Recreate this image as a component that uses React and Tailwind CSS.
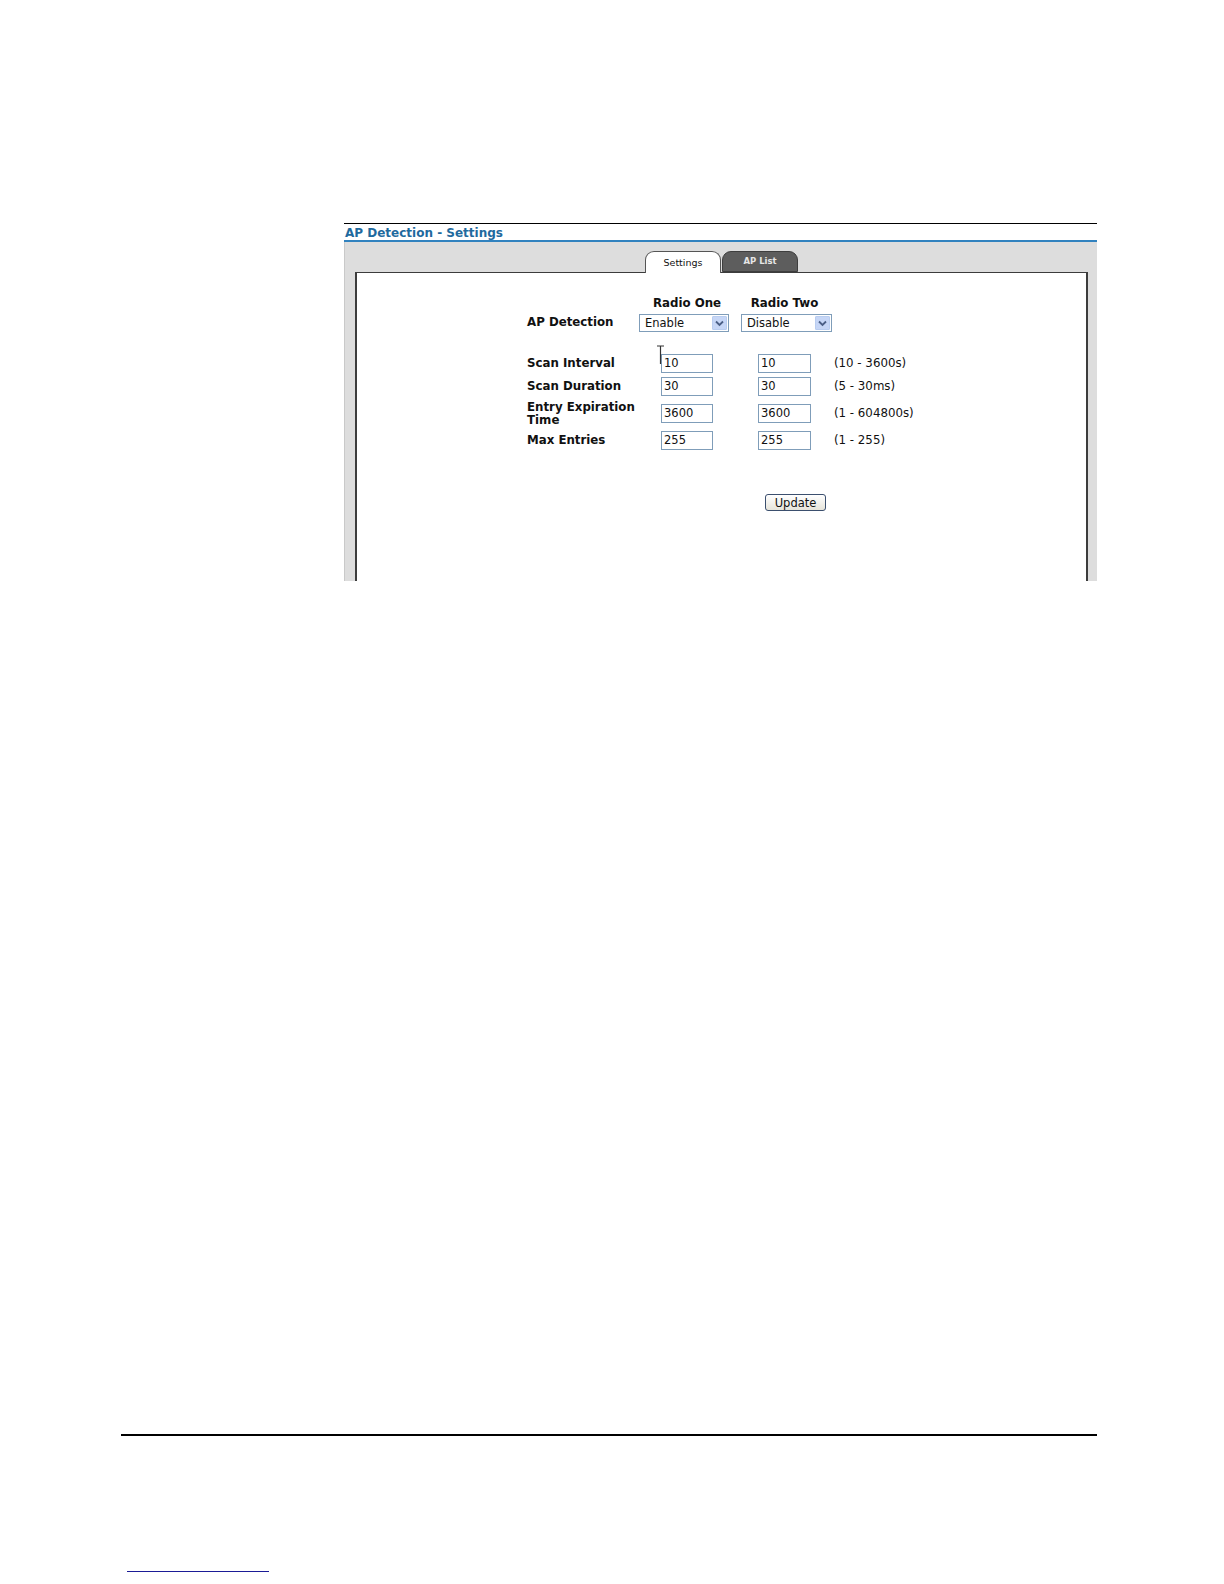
import React from 'react';

const font = "font-['DejaVu_Sans',Verdana,sans-serif]";

function Select({ value, width }) {
  return (
    <div
      className={`flex h-[18px] items-stretch border border-[#7f9db9] bg-white ${width}`}
    >
      <span className="flex-1 pl-[5px] text-[11.5px] leading-[16px] text-[#111]">{value}</span>
      <span className="m-px flex w-[15px] items-center justify-center rounded-[1px] border border-[#b9cdf0] bg-[#c6d6f6]">
        <svg width="9" height="7" viewBox="0 0 9 7">
          <path d="M1 1.5 4.5 5 8 1.5" fill="none" stroke="#4b5f86" strokeWidth="1.8" />
        </svg>
      </span>
    </div>
  );
}

function Field({ value, offset, width }) {
  return (
    <div className={offset}>
      <div
        className={`h-[19px] border border-[#7f9db9] bg-white pl-[2px] text-[11.5px] leading-[17px] text-[#111] ${width}`}
      >
        {value}
      </div>
    </div>
  );
}

const rows = [
  { label: 'Scan Interval', one: '10', two: '10', range: '(10 - 3600s)', mt: 'mt-[22px]' },
  { label: 'Scan Duration', one: '30', two: '30', range: '(5 - 30ms)', mt: 'mt-[4px]' },
  { label: 'Entry Expiration Time', one: '3600', two: '3600', range: '(1 - 604800s)', mt: 'mt-[8px]', tall: true },
  { label: 'Max Entries', one: '255', two: '255', range: '(1 - 255)', mt: 'mt-[8px]' },
];

export default function App() {
  return (
    <div className={`relative flex h-[1584px] w-[1224px] flex-col bg-white ${font}`}>
      <div className="pl-[344px] pt-[223px]">
        <div className="w-[753px] border-t border-black">
          <div className="h-[18px] border-b-2 border-[#3182bf] pl-px text-[12px] font-bold leading-[18px] text-[#1f6a9e]">
            AP Detection - Settings
          </div>
          <div className="flex h-[339px] flex-col overflow-hidden border-l border-[#c9c9c9] bg-[#dddddd] pl-[10px] pr-[9px] pt-[9px]">
            <div className="relative z-10 -mb-px flex h-[22px] justify-center">
              <div className="flex w-[76px] items-center justify-center rounded-t-[9px] border border-b-0 border-[#555] bg-white text-[9.5px] leading-none text-[#111]">
                Settings
              </div>
              <div className="ml-px flex h-[21px] w-[76px] items-center justify-center rounded-t-[9px] border border-[#3e3e3e] bg-[#5d5d5d] text-[8.5px] font-bold leading-none text-[#e6e6e6]">
                AP List
              </div>
            </div>
            <div className="flex-1 border-x-2 border-t border-[#3c3c3c] bg-white">
              <div className="pl-[170px] pt-[23px]">
                <div className="flex h-[16px] items-center">
                  <div className="w-[112px]" />
                  <div className="flex w-[102px] pl-[22px]">
                    <div className="flex w-[52px] justify-center whitespace-nowrap text-[11.8px] font-bold text-[#111]">Radio One</div>
                  </div>
                  <div className="flex w-[93px] pl-[17px]">
                    <div className="flex w-[53px] justify-center whitespace-nowrap text-[11.8px] font-bold text-[#111]">Radio Two</div>
                  </div>
                </div>
                <div className="mt-[2px] flex h-[18px] items-center">
                  <div className="w-[112px] text-[11.8px] font-bold text-[#111]">AP Detection</div>
                  <div className="w-[102px]">
                    <Select value="Enable" width="w-[90px]" />
                  </div>
                  <Select value="Disable" width="w-[91px]" />
                </div>
                {rows.map((r) => (
                  <div key={r.label} className={`flex h-[19px] ${r.tall ? 'items-start' : 'items-center'} ${r.mt}`}>
                    <div
                      className={`w-[112px] text-[11.8px] font-bold text-[#111] ${
                        r.tall ? '-mt-[3px] leading-[13px]' : 'leading-[19px]'
                      }`}
                    >
                      {r.tall ? (
                        <>
                          Entry Expiration
                          <br />
                          Time
                        </>
                      ) : (
                        r.label
                      )}
                    </div>
                    <Field value={r.one} offset="w-[102px] pl-[22px]" width="w-[52px]" />
                    <Field value={r.two} offset="w-[93px] pl-[17px]" width="w-[53px]" />
                    <div className="self-center text-[11.8px] leading-[19px] text-[#111]">{r.range}</div>
                  </div>
                ))}
                <div className="ml-[238px] mt-[44px] flex">
                  <button className="h-[17px] w-[61px] rounded-[3px] border border-[#3b4f6e] bg-gradient-to-b from-white to-[#e6e4da] text-[11.5px] leading-[14px] text-[#111]">
                    Update
                  </button>
                </div>
              </div>
            </div>
          </div>
        </div>
      </div>

      <div className="ml-[121px] mt-[853px] h-[2px] w-[976px] bg-black" />
      <div className="ml-[127px] mt-[135px] h-px w-[142px] bg-[#1b1b96]" />

      {/* text cursor hovering over the first field */}
      <svg className="absolute left-[656px] top-[345px]" width="9" height="20" viewBox="0 0 9 20">
        <path d="M1 1h7M4.5 1v18" fill="none" stroke="#333" strokeWidth="1.2" />
      </svg>
    </div>
  );
}
